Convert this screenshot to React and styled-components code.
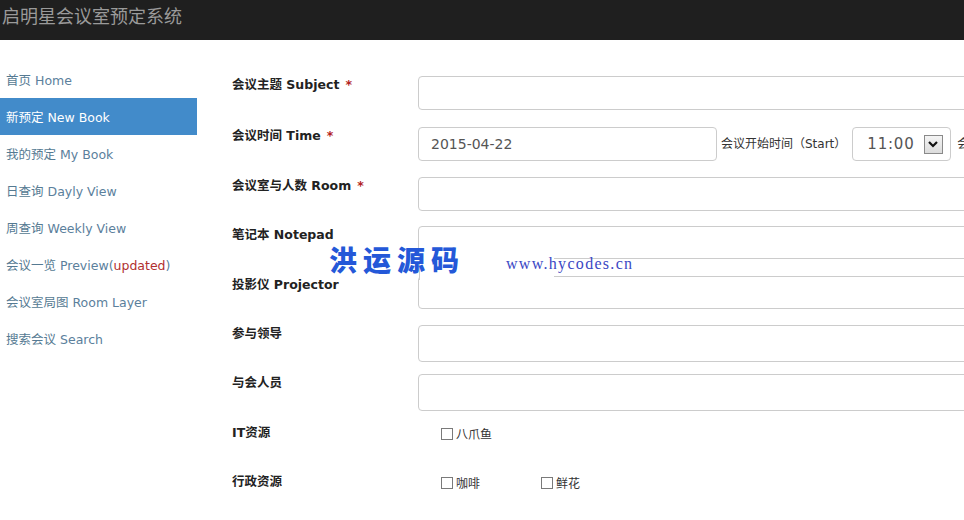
import React from "react";
import styled, { createGlobalStyle } from "styled-components";

const GlobalStyle = createGlobalStyle`
  html, body {
    margin: 0;
    padding: 0;
    background: #ffffff;
    overflow: hidden;
  }
  body {
    font-family: "DejaVu Sans", "Noto Sans CJK SC", sans-serif;
    font-size: 13px;
    color: #333333;
  }
`;

const Page = styled.div`
  position: relative;
  width: 964px;
  height: 520px;
  overflow: hidden;
`;

const Header = styled.div`
  height: 40px;
  background: #1f1f1f;
  box-sizing: border-box;
  padding: 4px 0 0 2px;
`;

const Brand = styled.div`
  font-family: "Noto Sans CJK SC", sans-serif;
  font-size: 18px;
  line-height: 22px;
  color: #9a9a9a;
`;

const Main = styled.div`
  display: flex;
  padding-top: 21px;
`;

const Sidebar = styled.ul`
  list-style: none;
  margin: 0;
  padding: 0;
  width: 197px;
  flex-shrink: 0;
`;

const NavItem = styled.li`
  height: 37px;
  line-height: 37px;
  padding-left: 6px;
  font-size: 12.5px;
  color: ${p => (p.$active ? "#ffffff" : "#5b809c")};
  background: ${p => (p.$active ? "#428bca" : "transparent")};
  white-space: nowrap;
  .cn {
    font-family: "Noto Sans CJK SC", sans-serif;
    color: ${p => (p.$active ? "#ffffff" : "#557a92")};
  }
  .red {
    color: #b03030;
  }
`;

const Form = styled.div`
  margin-left: 35px;
  padding-top: 15px;
  flex: 1;
`;

const Row = styled.div`
  display: grid;
  grid-template-columns: 186px 1fr;
  align-items: start;
  height: ${p => p.$h}px;
`;

const Label = styled.div`
  font-weight: bold;
  font-size: 12.5px;
  line-height: 16px;
  color: #222222;
  white-space: nowrap;
  .cn {
    font-family: "Noto Sans CJK SC", sans-serif;
  }
  .req {
    color: #b22222;
    margin-left: 6px;
  }
`;

const Controls = styled.div`
  display: flex;
  align-items: flex-start;
  white-space: nowrap;
`;

const Input = styled.div`
  box-sizing: border-box;
  width: ${p => p.$w || 620}px;
  height: ${p => p.$h || 34}px;
  border: 1px solid #cccccc;
  border-radius: 4px;
  padding-left: 12px;
  font-size: 14px;
  line-height: ${p => (p.$h || 34) - 2}px;
  color: #555555;
  flex-shrink: 0;
`;

const InlineText = styled.span`
  font-family: "DejaVu Sans", "Noto Sans CJK SC", sans-serif;
  font-size: 12px;
  line-height: 34px;
  color: #333333;
  margin: 0 ${p => p.$mr || 0}px 0 ${p => p.$ml || 0}px;
`;

const Select = styled.div`
  box-sizing: border-box;
  width: 99px;
  height: 34px;
  border: 1px solid #cccccc;
  border-radius: 4px;
  display: flex;
  align-items: center;
  padding-left: 14px;
  gap: 9px;
  font-size: 15px;
  letter-spacing: 0.8px;
  color: #555555;
  flex-shrink: 0;
`;

const SelectButton = styled.span`
  width: 19px;
  height: 19px;
  box-sizing: border-box;
  border: 1px solid #8a8a8a;
  background: linear-gradient(#f4f4f4, #dcdcdc);
  display: flex;
  align-items: center;
  justify-content: center;
`;

const CheckGroup = styled.div`
  display: flex;
  align-items: flex-start;
  padding-left: 23px;
  padding-top: 2px;
`;

const CheckItem = styled.label`
  display: flex;
  align-items: center;
  width: 100px;
  height: 16px;
  font-family: "Noto Sans CJK SC", sans-serif;
  font-size: 12px;
  color: #333333;
  line-height: 16px;
`;

const Box = styled.span`
  width: 12px;
  height: 12px;
  box-sizing: border-box;
  border: 1px solid #7a7a7a;
  background: #fff;
  margin-right: 3px;
  margin-top: -1px;
  flex-shrink: 0;
`;

const WatermarkCover = styled.div`
  position: absolute;
  left: 419px;
  top: 256px;
  width: 134px;
  height: 24px;
  background: #ffffff;
  border-left: 1px solid #cccccc;
`;

const WatermarkTitle = styled.div`
  position: absolute;
  left: 329px;
  top: 241px;
  font-family: "Noto Sans CJK SC", sans-serif;
  font-weight: 900;
  font-size: 28px;
  letter-spacing: 6px;
  line-height: 36px;
  color: #2458d8;
`;

const WatermarkUrl = styled.div`
  position: absolute;
  left: 506px;
  top: 254px;
  font-family: "Liberation Serif", serif;
  font-size: 16px;
  letter-spacing: 1.3px;
  line-height: 20px;
  color: #3a47c4;
`;

const navItems = [
  { cn: "首页", en: "Home" },
  { cn: "新预定", en: "New Book", active: true },
  { cn: "我的预定", en: "My Book" },
  { cn: "日查询", en: "Dayly View" },
  { cn: "周查询", en: "Weekly View" },
  { cn: "会议一览", en: "Preview", extra: true },
  { cn: "会议室局图", en: "Room Layer" },
  { cn: "搜索会议", en: "Search" },
];

const Chevron = () => (
  <svg width="12" height="10" viewBox="0 0 12 10">
    <path d="M2 3 L6 7 L10 3" fill="none" stroke="#111" strokeWidth="2.2" />
  </svg>
);

export default function App() {
  return (
    <Page>
      <GlobalStyle />
      <Header>
        <Brand>启明星会议室预定系统</Brand>
      </Header>
      <Main>
        <Sidebar>
          {navItems.map(item => (
            <NavItem key={item.en} $active={item.active}>
              <span className="cn">{item.cn}</span> {item.en}
              {item.extra && (
                <>
                  (<span className="red">updated</span>)
                </>
              )}
            </NavItem>
          ))}
        </Sidebar>
        <Form>
          <Row $h={51}>
            <Label>
              <span className="cn">会议主题</span> Subject<span className="req">*</span>
            </Label>
            <Controls>
              <Input />
            </Controls>
          </Row>
          <Row $h={50}>
            <Label>
              <span className="cn">会议时间</span> Time<span className="req">*</span>
            </Label>
            <Controls>
              <Input $w={299}>2015-04-22</Input>
              <InlineText $ml={4} $mr={6}>会议开始时间（Start）</InlineText>
              <Select>
                11:00
                <SelectButton>
                  <Chevron />
                </SelectButton>
              </Select>
              <InlineText $ml={6}>会议结束时间（End）</InlineText>
            </Controls>
          </Row>
          <Row $h={49}>
            <Label>
              <span className="cn">会议室与人数</span> Room<span className="req">*</span>
            </Label>
            <Controls>
              <Input />
            </Controls>
          </Row>
          <Row $h={50}>
            <Label>
              <span className="cn">笔记本</span> Notepad
            </Label>
            <Controls>
              <Input $h={33} />
            </Controls>
          </Row>
          <Row $h={49}>
            <Label>
              <span className="cn">投影仪</span> Projector
            </Label>
            <Controls>
              <Input $h={33} />
            </Controls>
          </Row>
          <Row $h={49}>
            <Label>
              <span className="cn">参与领导</span>
            </Label>
            <Controls>
              <Input $h={37} />
            </Controls>
          </Row>
          <Row $h={50}>
            <Label>
              <span className="cn">与会人员</span>
            </Label>
            <Controls>
              <Input $h={37} />
            </Controls>
          </Row>
          <Row $h={49}>
            <Label>
              IT<span className="cn">资源</span>
            </Label>
            <CheckGroup>
              <CheckItem>
                <Box />
                八爪鱼
              </CheckItem>
            </CheckGroup>
          </Row>
          <Row $h={40}>
            <Label>
              <span className="cn">行政资源</span>
            </Label>
            <CheckGroup>
              <CheckItem>
                <Box />
                咖啡
              </CheckItem>
              <CheckItem>
                <Box />
                鲜花
              </CheckItem>
            </CheckGroup>
          </Row>
        </Form>
      </Main>
      <WatermarkCover />
      <WatermarkTitle>洪运源码</WatermarkTitle>
      <WatermarkUrl>www.hycodes.cn</WatermarkUrl>
    </Page>
  );
}
